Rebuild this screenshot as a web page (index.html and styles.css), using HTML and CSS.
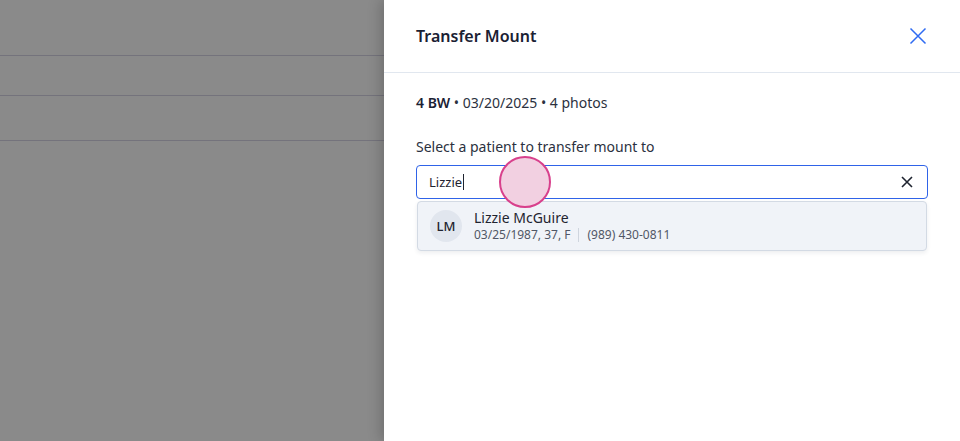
FILE: index.html
```html
<!DOCTYPE html>
<html lang="en">
<head>
<meta charset="utf-8">
<title>Transfer Mount</title>
<link rel="stylesheet" href="styles.css">
</head>
<body>
<div class="screen">
  <div class="backdrop">
    <div class="bg-row r1"></div>
    <div class="bg-row r2"></div>
    <div class="bg-row r3"></div>
  </div>
  <aside class="panel">
    <header class="panel-header">
      <h1 class="title">Transfer Mount</h1>
      <button class="close" aria-label="Close">
        <svg width="18" height="18" viewBox="0 0 18 18"><path d="M1.5 1.5L16.5 16.5M16.5 1.5L1.5 16.5" stroke="#2f6bf2" stroke-width="1.5" fill="none"/></svg>
      </button>
    </header>
    <div class="panel-body">
      <p class="meta"><strong>4 BW</strong> • 03/20/2025 • 4 photos</p>
      <label class="label">Select a patient to transfer mount to</label>
      <div class="combo">
        <div class="input">
          <span class="value">Lizzie</span><span class="caret"></span>
          <span class="clear">
            <svg width="12" height="12" viewBox="0 0 12 12"><path d="M1 1L11 11M11 1L1 11" stroke="#1f2430" stroke-width="1.6" fill="none"/></svg>
          </span>
        </div>
        <div class="dropdown">
          <div class="option">
            <div class="avatar">LM</div>
            <div class="info">
              <div class="name">Lizzie McGuire</div>
              <div class="sub"><span>03/25/1987, 37, F</span><span class="sep"></span><span>(989) 430-0811</span></div>
            </div>
          </div>
        </div>
        <div class="touch"></div>
      </div>
    </div>
  </aside>
</div>
</body>
</html>
```
FILE: styles.css
```css
* { box-sizing: border-box; }
html, body { margin: 0; padding: 0; }
body {
  font-family: "Noto Sans", "Open Sans", sans-serif;
  color: #1c2333;
  width: 960px;
  height: 441px;
  overflow: hidden;
}
.screen {
  display: flex;
  width: 960px;
  height: 441px;
}
.backdrop {
  width: 384px;
  flex: none;
  background: #8a8a8a;
  display: flex;
  flex-direction: column;
}
.bg-row { border-bottom: 1px solid #74737c; }
.r1 { height: 56px; }
.r2 { height: 40px; }
.r3 { height: 45px; }
.panel {
  flex: 1;
  background: #fff;
  box-shadow: -4px 0 12px rgba(0,0,0,0.18);
  display: flex;
  flex-direction: column;
}
.panel-header {
  height: 73px;
  border-bottom: 1px solid #e1e7ef;
  display: flex;
  align-items: center;
  justify-content: space-between;
  padding: 0 32px;
}
.title {
  margin: 0;
  font-size: 16px;
  font-weight: 600;
  color: #1a2133;
}
.close {
  background: none;
  border: 0;
  padding: 0;
  width: 18px;
  height: 18px;
  display: flex;
  margin-right: 1px;
}
.panel-body {
  padding: 20px 32px 0;
  display: flex;
  flex-direction: column;
}
.meta {
  margin: 0;
  font-size: 14px;
  line-height: 20px;
  color: #2b3140;
}
.meta strong { font-weight: 600; color: #1a2133; }
.label {
  margin-top: 24px;
  font-size: 14px;
  line-height: 20px;
  color: #2b3140;
}
.combo {
  position: relative;
  margin-top: 8px;
}
.input {
  height: 34px;
  border: 1px solid #2f63e8;
  border-radius: 4px;
  display: flex;
  align-items: center;
  padding: 0 14px 0 12px;
  font-size: 13px;
  color: #1f2430;
}
.caret {
  width: 1px;
  height: 16px;
  background: #1f2430;
  margin-left: 1px;
}
.clear {
  margin-left: auto;
  display: flex;
}
.dropdown {
  margin: 2px 1px 0;
  background: #f0f3f8;
  border: 1px solid #d3dae4;
  border-radius: 4px;
  box-shadow: 0 2px 4px rgba(30,40,60,0.08);
}
.option {
  display: flex;
  align-items: center;
  gap: 12px;
  padding: 7px 12px 7px;
}
.avatar {
  width: 32px;
  height: 32px;
  border-radius: 50%;
  background: #e1e6ee;
  display: flex;
  align-items: center;
  justify-content: center;
  font-size: 13px;
  font-weight: 500;
  color: #1f2430;
}
.name {
  font-size: 14px;
  line-height: 18px;
  color: #1f2430;
}
.sub {
  font-size: 12px;
  line-height: 16px;
  color: #505766;
  display: flex;
  align-items: center;
}
.sep {
  width: 1px;
  height: 14px;
  background: #cfd5de;
  margin: 0 8px;
}
.touch {
  position: absolute;
  left: 83px;
  top: -9px;
  width: 52px;
  height: 52px;
  border-radius: 50%;
  background: #f2d0e1;
  border: 2px solid #d8408c;
}
```
